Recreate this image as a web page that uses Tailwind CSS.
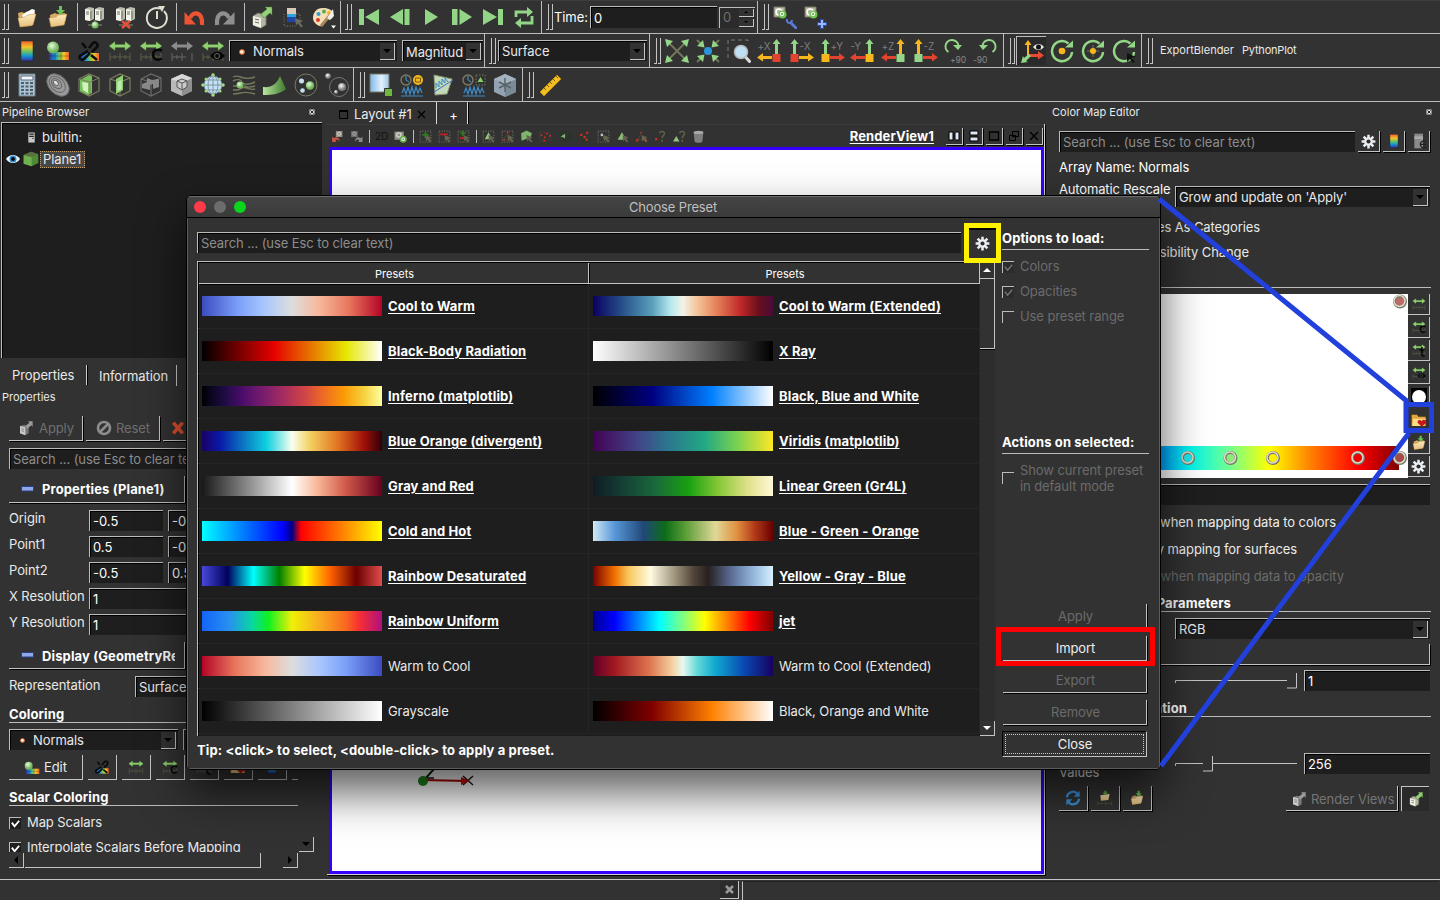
<!DOCTYPE html>
<html lang="en">
<head>
<meta charset="utf-8">
<title>ParaView</title>
<script src="https://cdn.jsdelivr.net/npm/@tailwindcss/browser@4"></script>
</head>
<body class="w-[1440px] h-[900px] overflow-hidden relative bg-[#323232] text-[#e9e9e9] font-['Inter','Liberation_Sans',sans-serif] text-[13px] tracking-[-0.09px] leading-none whitespace-nowrap flex flex-col">

<svg class="absolute size-0">
  <defs>
    <linearGradient id="gRain" x1="0" y1="0" x2="0" y2="1"><stop offset="0" stop-color="#f0622a"/><stop offset=".3" stop-color="#f5c22b"/><stop offset=".55" stop-color="#5fc06a"/><stop offset=".75" stop-color="#1495d8"/><stop offset="1" stop-color="#3a2f9c"/></linearGradient>
    <linearGradient id="gRainH"><stop offset="0" stop-color="#3a2f9c"/><stop offset=".3" stop-color="#1495d8"/><stop offset=".55" stop-color="#8cc84a"/><stop offset=".75" stop-color="#f5c22b"/><stop offset="1" stop-color="#f0622a"/></linearGradient>
    <linearGradient id="gFold" x1="0" y1="0" x2="0" y2="1"><stop offset="0" stop-color="#fdebc0"/><stop offset="1" stop-color="#e8c07a"/></linearGradient>
    <radialGradient id="gGreen" cx=".4" cy=".35"><stop offset="0" stop-color="#e6fadb"/><stop offset="1" stop-color="#74b85c"/></radialGradient>
    <radialGradient id="gGray" cx=".4" cy=".35"><stop offset="0" stop-color="#fff"/><stop offset="1" stop-color="#7d7d7d"/></radialGradient>
    <linearGradient id="gBlue"><stop offset="0" stop-color="#7db9ec"/><stop offset=".6" stop-color="#e4f1fb"/><stop offset="1" stop-color="#9cc6ea"/></linearGradient>
    <linearGradient id="gLeaf"><stop offset="0" stop-color="#b9e6a0"/><stop offset="1" stop-color="#3f7a2c"/></linearGradient>
  </defs>
  <symbol id="folder" viewBox="0 0 24 24"><path d="M3 8l4-1 2 1 4-2 7 1v6l-3 8-12 1z" fill="#d9ab62"/><path d="M7 10l10-6 3 1-2 8-9 3z" fill="#fff"/><path d="M3 13l7-1 2-2 9-1-3 11-13 2z" fill="url(#gFold)" stroke="#b98a45" stroke-width=".5"/></symbol>
  <symbol id="foldersave" viewBox="0 0 24 24"><path d="M4 10l5-2 2 1 8-1 1 6-2 6-13 1z" fill="#d9ab62"/><path d="M3 13l7-1 2-2 9-1-3 11-13 2z" fill="url(#gFold)" stroke="#b98a45" stroke-width=".5"/><path d="M13 1h3v4h3l-4.500 5L10 5h3z" fill="#6cc254"/></symbol>
  <symbol id="server" viewBox="0 0 24 24"><path d="M2 4l4-2 5 1v11l-4 2-5-1zM12 4l4-2 5 1v11l-4 2-5-1z" fill="#bdbdae"/><path d="M2 4l5 1v11l-5-1zM12 4l5 1v11l-5-1z" fill="#f4f4ec"/><path d="M3 7h3M3 9h3M13 7h3M13 9h3M8 6v8M18 6v8" stroke="#6a6a60" fill="none"/><path d="M12 15v3M5 20h14" stroke="#8a8a70"/></symbol>
  <symbol id="connect" viewBox="0 0 24 24"><use href="#server"/><circle cx="12" cy="20" r="3.500" fill="url(#gGreen)"/></symbol>
  <symbol id="disconnect" viewBox="0 0 24 24"><use href="#server"/><path d="M8 16l8 7M16 16l-8 7" stroke="#e8503c" stroke-width="2.400"/></symbol>
  <symbol id="clock" viewBox="0 0 24 24"><path d="M15 3.500A10 10 0 1 0 19 6" fill="none" stroke="#deded0" stroke-width="2"/><path d="M12 6v8" stroke="#deded0" stroke-width="2"/><path d="M13 1h7l-3 6z" fill="#deded0"/></symbol>
  <symbol id="undo" viewBox="0 0 24 24"><path d="M8 13C11 6 21 6 20 20" fill="none" stroke="#ee5433" stroke-width="4.200"/><path d="M2.500 7v12.500H14z" fill="#ee5433"/></symbol>
  <symbol id="redo" viewBox="0 0 24 24"><path d="M16 13C13 6 3 6 4 20" fill="none" stroke="#8f8f8f" stroke-width="4.200"/><path d="M21.500 7v12.500H10z" fill="#8f8f8f"/></symbol>
  <symbol id="apply" viewBox="0 0 24 24"><path d="M3 11l5-3 8 2v10l-5 3-8-3z" fill="#b4b4a4" stroke="#77775f"/><path d="M3 11l8 2v10l-8-3z" fill="#efefe4"/><path d="M5 14l4 1M5 17l4 1" stroke="#66665a"/><path d="M11 9l6-5-2-2h7v8l-2-2-6 5z" fill="#93d077" stroke="#4a7a35" stroke-width=".5"/></symbol>
  <symbol id="applyG" viewBox="0 0 24 24"><path d="M3 9l6-2 7 2v11l-5 3-8-3z" fill="#777"/><path d="M3 9l8 2v12l-8-3z" fill="#c9c9c9"/><path d="M5 13l4 1M5 16l4 1" stroke="#666"/><path d="M11 9l6-5-2-2h7v8l-2-2-6 5z" fill="#9a9a9a"/></symbol>
  <symbol id="autoc" viewBox="0 0 24 24"><path d="M6 3h9v6H6z" fill="#d8c8b8"/><path d="M6 9h9v3H6z" fill="#2aa5e0"/><path d="M6 12h9v5H6z" fill="#2047a5"/><path d="M3 9v12h12M15 9h4v6" fill="none" stroke="#7a7a64" stroke-dasharray="1 1.500"/><path d="M14 13l8 3-3 1.500 3 4-2 1-3-4-2 2z" fill="#6d6b60"/></symbol>
  <symbol id="palette" viewBox="0 0 24 24"><path d="M11 3C4 3 1 8 1 13s6 9 9 8 1-5 4-6 7 0 7-5-4-7-10-7z" fill="#f4dfb8"/><circle cx="6.500" cy="9" r="2" fill="#2f9ce0"/><circle cx="12" cy="6.500" r="2" fill="#58ae48"/><circle cx="17" cy="8" r="2" fill="#f3b420"/><circle cx="6" cy="15" r="2" fill="#dd3a2a"/><path d="M9 21L19 9" stroke="#a7895a" stroke-width="3"/><path d="M15 13l6-9 1 7-4 4z" fill="#eee"/><path d="M19 20.500h5l-2.500 3z" fill="#fff"/></symbol>
  <symbol id="first" viewBox="0 0 24 24"><path d="M2 4h5v16H2zM22 4v16L8 12z" fill="#93d587"/></symbol>
  <symbol id="prev" viewBox="0 0 24 24"><path d="M16.500 4h5v16h-5zM15 4v16L2 12z" fill="#93d587"/></symbol>
  <symbol id="play" viewBox="0 0 24 24"><path d="M6 4v16l13-8z" fill="#93d587"/></symbol>
  <symbol id="next" viewBox="0 0 24 24"><path d="M2 4h5.500v16H2zM9.500 4v16L22 12z" fill="#93d587"/></symbol>
  <symbol id="last" viewBox="0 0 24 24"><path d="M17 4h5v16h-5zM2 4v16l14-8z" fill="#93d587"/></symbol>
  <symbol id="loop" viewBox="0 0 24 24"><path d="M4 12V7h13M20 11v7H8" fill="none" stroke="#93d587" stroke-width="2.800"/><path d="M15 2l6 5-6 5zM9 13v10l-6-5z" fill="#93d587"/></symbol>
  <symbol id="cam" viewBox="0 0 24 24"><path d="M1 2h11v10H1z" fill="#b9b6a4" stroke="#77745f"/><circle cx="6" cy="7" r="3" fill="none" stroke="#fff" stroke-width="1.500"/><circle cx="9.500" cy="9.500" r="4" fill="#6bc24e"/><circle cx="9" cy="9" r="1.800" fill="none" stroke="#fff"/></symbol>
  <symbol id="camwrench" viewBox="0 0 24 24"><use href="#cam" /><path d="M17 17l7 7" stroke="#5a7bd8" stroke-width="2.800"/><path d="M14 14c-1 5 5 5 5 1" stroke="#5a7bd8" stroke-width="2" fill="none"/></symbol>
  <symbol id="camplus" viewBox="0 0 24 24"><use href="#cam"/><path d="M18 14v10M13 19h10" stroke="#2f4da8" stroke-width="4"/><path d="M18 15v8M14 19h8" stroke="#9db8f6" stroke-width="2"/></symbol>
  <symbol id="bar" viewBox="0 0 24 24"><path d="M6 2h12v20H6z" fill="url(#gRain)" stroke="#222" stroke-width=".5"/></symbol>
  <symbol id="editc" viewBox="0 0 24 24"><path d="M3 13h20v8H3z" fill="url(#gRainH)"/><path d="M3 17h20M9 13v8M15 13v8" stroke="#0004"/><circle cx="7" cy="8.500" r="6" fill="url(#gGreen)"/></symbol>
  <symbol id="chain" viewBox="0 0 24 24"><path d="M3 14h19v8H3z" fill="url(#gRainH)"/><path d="M12 9l4-5c2-2 6 1 4 4l-5 5M11 12l-7 4c-4 3 1 6 3 4l6-6M5 4l4 5M14 16l6 5" fill="none" stroke="#0b0b0b" stroke-width="2.600"/></symbol>
  <symbol id="ticks" viewBox="0 0 24 24"><path d="M2 14v8M7 16v4M12 14v8M17 16v4M22 14v8M2 18h20" stroke="#5c5c48" fill="none"/></symbol>
  <symbol id="arr" viewBox="0 0 24 24"><path d="M1 7l6-4.500v3h10v-3L23 7l-6 4.500v-3H7v3z" fill="#8fd070" stroke="#4b7a38" stroke-width=".4"/></symbol>
  <symbol id="rescale" viewBox="0 0 24 24"><use href="#ticks"/><use href="#arr"/></symbol>
  <symbol id="rescalec" viewBox="0 0 24 24"><use href="#ticks"/><use href="#arr"/><path d="M23 11.500c-5-2-9 0-9 4s4 7 9 4" fill="none" stroke="#080808" stroke-width="2.600"/></symbol>
  <symbol id="rescalet" viewBox="0 0 24 24"><use href="#ticks"/><use href="#arr"/><path d="M17 7v12c0 3 2 4 5 3M13 12h8" fill="none" stroke="#080808" stroke-width="2.600"/></symbol>
  <symbol id="rescaleg" viewBox="0 0 24 24"><path d="M2 14v8M7 16v4M12 14v8M22 14v8M2 18h14" stroke="#666" fill="none"/><path d="M1 7l6-4.500v3h10v-3L23 7l-6 4.500v-3H7v3z" fill="#8b8b8b"/></symbol>
  <symbol id="rescalee" viewBox="0 0 24 24"><use href="#ticks"/><use href="#arr"/><path d="M9 17c4-6 11-6 15 0-4 5-11 5-15 0z" fill="#080808"/><circle cx="16" cy="17" r="2.500" fill="none" stroke="#666"/></symbol>
  <symbol id="calc" viewBox="0 0 24 24"><path d="M4 1h16v22H4z" fill="#a9c8dd" stroke="#6f7d80"/><path d="M6 3h12v4H6z" fill="#eef6fa" stroke="#667"/><path d="M6 10h3M10.500 10h3M15 10h3M6 13.500h3M10.500 13.500h3M15 13.500h3M6 17h3M10.500 17h3M15 17h3M6 20.500h3M10.500 20.500h3M15 20.500h3" stroke="#545c60" stroke-width="2"/></symbol>
  <symbol id="contour" viewBox="0 0 24 24"><g fill="none" stroke="#666" transform="rotate(45 12 12)"><ellipse cx="12" cy="12" rx="13" ry="9" fill="#9a9a9a"/><ellipse cx="11" cy="12" rx="9.500" ry="6.500"/><ellipse cx="10" cy="12" rx="6" ry="4"/><ellipse cx="9" cy="12" rx="3" ry="2" fill="#ddd"/></g></symbol>
  <symbol id="clip" viewBox="0 0 24 24"><path d="M2 6l10-5 10 4v13l-10 5-10-5z" fill="none" stroke="#7c7c60" stroke-width="1.200"/><path d="M3 7l9-5 3 1v17l-4 2-8-4z" fill="#78c25c"/><path d="M5 9l6 1v10l-5-3z" fill="#d4f2c4"/><path d="M22 5l-9 4v13M13 9L2 6" fill="none" stroke="#7c7c60"/></symbol>
  <symbol id="slice" viewBox="0 0 24 24"><path d="M2 6l10-5 10 4v13l-10 5-10-5zM2 6l10 3 10-4M12 9v14" fill="none" stroke="#7c7c60" stroke-width="1.200"/><path d="M8 6l7-4v15l-7 4z" fill="#8ed372"/><path d="M9.500 9l4-2v9l-4 2z" fill="#c2eab0"/></symbol>
  <symbol id="thresh" viewBox="0 0 24 24"><path d="M2 6l10-5 10 4v13l-10 5-10-5zM2 6l10 3 10-4M12 9v14" fill="none" stroke="#6c6c6c" stroke-width="1.200"/><path d="M3 11l5-2v-4l5 2 7-1v8l-6 2v-5l-3 1v5l-8-2z" fill="#888"/></symbol>
  <symbol id="extract" viewBox="0 0 24 24"><path d="M1 6l11-5 10 4v13l-10 5-11-5z" fill="#b9b9b9"/><path d="M12 10l10-5v13l-10 5z" fill="#8f8f8f"/><path d="M1 6l11-5 10 4-10 5z" fill="#d8d8d8"/><path d="M7 8l5-2 5 2v6l-5 3-5-3zM7 8l5 2 5-2M12 10v6" fill="#c9c9c9" stroke="#555"/></symbol>
  <symbol id="glyph" viewBox="0 0 24 24"><circle cx="12" cy="12" r="9" fill="#c4e0f2" stroke="#69879a"/><path d="M3 12h18M12 2v20M5 7h14M5 17h14" stroke="#6d8898" stroke-width=".8"/><ellipse cx="12" cy="12" rx="5" ry="9" fill="none" stroke="#6d8898" stroke-width=".8"/><g fill="#a5da86"><circle cx="12" cy="2" r="1.800"/><circle cx="12" cy="22" r="1.800"/><circle cx="2" cy="12" r="1.800"/><circle cx="22" cy="12" r="1.800"/><circle cx="5" cy="6" r="1.500"/><circle cx="19" cy="6" r="1.500"/><circle cx="5" cy="18" r="1.500"/><circle cx="19" cy="18" r="1.500"/></g></symbol>
  <symbol id="stream" viewBox="0 0 24 24"><g fill="none" stroke="#757a5c" stroke-width="1.400"><path d="M1 4c7-4 8 5 22 0M1 8c4-2 8-2 9 1s7 3 13 0M1 13h4M12 13c4 2 8 1 11 0M1 17c5 0 6 0 9-2s9 3 13 1M1 21c9 0 10-4 22 0"/></g><circle cx="8" cy="12" r="3.500" fill="url(#gGreen)"/></symbol>
  <symbol id="warp" viewBox="0 0 24 24"><path d="M0 14c8 1 14-3 17-11l6 13c-6 5-13 6-23 6z" fill="url(#gLeaf)"/></symbol>
  <symbol id="group" viewBox="0 0 24 24"><circle cx="12" cy="12" r="11" fill="none" stroke="#777c60"/><circle cx="7.500" cy="8" r="2.500" fill="#c8dff0"/><circle cx="8.500" cy="17.500" r="2.300" fill="#c8dff0"/><circle cx="16" cy="12.500" r="4.200" fill="url(#gGreen)"/></symbol>
  <symbol id="ungroup" viewBox="0 0 24 24"><circle cx="14" cy="14" r="9.500" fill="none" stroke="#777"/><circle cx="3" cy="3" r="2.800" fill="url(#gGray)"/><circle cx="17" cy="14" r="4" fill="url(#gGray)"/><circle cx="11" cy="19" r="2" fill="url(#gGray)"/></symbol>
  <symbol id="exsel" viewBox="0 0 24 24"><path d="M1 1h19v18H1z" fill="url(#gBlue)" stroke="#77775f"/><path d="M15.500 15.500h8v8h-8z" fill="#6cb83c" stroke="#323232"/></symbol>
  <symbol id="wave" viewBox="0 0 24 24"><path d="M1 23h22M2 20l2-5 2 6 2-7 2 7 2-7 2 7 2-7 2 6 2-5 2 5" fill="none" stroke="#3e8ac4" stroke-width="1.200"/></symbol>
  <symbol id="ptime" viewBox="0 0 24 24"><circle cx="6" cy="7" r="5" fill="none" stroke="#7f7a63" stroke-width="1.400"/><path d="M6 3v4l3 2" stroke="#4a98d0" fill="none"/><circle cx="18" cy="7" r="5" fill="#f2b81e"/><path d="M15.500 5h5v4h-5z" fill="none" stroke="#7a5b0a"/><use href="#wave"/></symbol>
  <symbol id="pline" viewBox="0 0 24 24"><path d="M3 2l18 4-5 15-12 1z" fill="#c3d9b8" stroke="#8a937a"/><path d="M3 19L22 7" stroke="#3e6fd0"/><path d="M5 15l0-5 3 4 0-6 3 4 0-6 3 4 0-5 3 4" fill="none" stroke="#3e8ac4"/></symbol>
  <symbol id="psel" viewBox="0 0 24 24"><circle cx="6" cy="7" r="5" fill="none" stroke="#7f7a63" stroke-width="1.400"/><path d="M6 3v4l3 2" stroke="#4a98d0" fill="none"/><path d="M14 2h9v10h-9z" fill="none" stroke="#77775f" stroke-dasharray="1.500 1.500"/><path d="M18.500 4l3 5h-6z" fill="#86cf66"/><use href="#wave"/></symbol>
  <symbol id="hex" viewBox="0 0 24 24"><path d="M1 6l11-5 11 5v13l-11 5-11-5z" fill="#93a3b1"/><path d="M12 11l11-5v13l-11 5z" fill="#7b8a97"/><path d="M1 6l11-5 11 5-11 5z" fill="#a3b2bf"/><path d="M12 5v14M6 9l12 6M18 9l-12 6" stroke="#555f66" stroke-width="1.400"/></symbol>
  <symbol id="ruler" viewBox="0 0 24 24"><path d="M1 19L18 2l4 4L5 23z" fill="#f2bd22" stroke="#b88808"/><path d="M5 15l2 2M8 12l2 2M11 9l2 2M14 6l2 2M17 3l2 2" stroke="#7a5a08"/></symbol>
  <symbol id="reset" viewBox="0 0 24 24"><path d="M4 4l16 16M20 4L4 20" stroke="#77775a" stroke-width="1.800"/><path d="M0 0l8 2-6 6zM24 0l-2 8-6-6zM0 24l2-8 6 6zM24 24l-8-2 6-6z" fill="#93d687"/></symbol>
  <symbol id="zoomdata" viewBox="0 0 24 24"><path d="M1 1l5 5M23 1l-5 5M1 23l5-5M23 23l-5-5" stroke="#77775a" stroke-width="1.800"/><path d="M8.500 8.500L1 7l6-6zM15.500 8.500L17 1l6 6zM8.500 15.500L7 23l-6-6zM15.500 15.500L23 17l-6 6z" fill="#93d687"/><circle cx="12" cy="12" r="4" fill="#2a97dc"/></symbol>
  <symbol id="zoombox" viewBox="0 0 24 24"><path d="M1 19V1h20v4" fill="none" stroke="#7d7d72" stroke-dasharray="4 3"/><circle cx="14" cy="13" r="6.500" fill="#bfe0f5" stroke="#b9b9b9" stroke-width="1.500"/><path d="M18.500 18l5 5.500" stroke="#ddd" stroke-width="3"/></symbol>
  <symbol id="axes" viewBox="0 0 24 24"><path d="M7 17V6H4.500L8 1l3.500 5H9v11z" fill="#f6b61c"/><path d="M9 15h9v-3l6 4.500-6 4V18H9z" fill="#e84a33"/><path d="M9 15l-5 4-1-2-2 7 7-1-2-1 5-5z" fill="#93d687"/><path d="M13 8c3-4 8-4 11 0-3 4-8 4-11 0z" fill="#e9e9e9"/><circle cx="18.500" cy="8" r="2.500" fill="#111"/></symbol>
  <symbol id="ring" viewBox="0 0 24 24"><path d="M18.500 4.500A10 10 0 1 0 22 13" fill="none" stroke="#93d687" stroke-width="2.500"/><path d="M15 8.500h8V1.500z" fill="#93d687"/></symbol>
  <symbol id="ring1" viewBox="0 0 24 24"><use href="#ring"/><circle cx="12" cy="12" r="3.300" fill="#f6b61c"/></symbol>
  <symbol id="ring2" viewBox="0 0 24 24"><use href="#ring"/><path d="M12 6v12M6 12h12" stroke="#77775a"/><circle cx="12" cy="12" r="3" fill="#f6b61c"/></symbol>
  <symbol id="ring3" viewBox="0 0 24 24"><use href="#ring"/><path d="M15 14l9 4-4 1 3 4-2 1-3-4-3 3z" fill="#111"/></symbol>
  <symbol id="gear" viewBox="0 0 24 24"><g stroke="#e9eef2" stroke-width="4"><path d="M12 1v22M1 12h22M4.200 4.200l15.600 15.600M19.800 4.200L4.200 19.800"/></g><circle cx="12" cy="12" r="7" fill="#e9eef2"/><circle cx="12" cy="12" r="3.300" fill="#2c2c2c"/></symbol>
  <symbol id="eye" viewBox="0 0 24 24"><path d="M0 12C6 3 18 3 24 12 18 21 6 21 0 12z" fill="#f2f6f9"/><circle cx="12" cy="12" r="6" fill="#2b8fd4"/><circle cx="12" cy="12" r="3.300" fill="#0a0a0a"/></symbol>
  <symbol id="cube" viewBox="0 0 24 24"><path d="M1 6l11-5 11 4v13l-10 5-12-4z" fill="#4d8a35"/><path d="M1 6l12 3v14l-12-4z" fill="#70b04f"/><path d="M1 6l11-5 11 4-10 4z" fill="#5b6f3f"/></symbol>
  <symbol id="tower" viewBox="0 0 24 24"><path d="M5 1h14v22H5z" fill="#c8c8c8"/><path d="M7 3h10v3H7zM7 8h10v3H7z" fill="#222"/><circle cx="15" cy="14" r="1.500" fill="#333"/></symbol>
  <symbol id="forbid" viewBox="0 0 24 24"><circle cx="12" cy="12" r="9" fill="none" stroke="#8c8c8c" stroke-width="4"/><path d="M6 18L18 6" stroke="#8c8c8c" stroke-width="4"/></symbol>
  <symbol id="redx" viewBox="0 0 24 24"><path d="M5 4l14 16M19 4L5 20" stroke="#e4502f" stroke-width="5.500"/></symbol>
  <symbol id="fav" viewBox="0 0 24 24"><path d="M1 4h8l2 3h11v14H1z" fill="#e4a63a"/><path d="M3 10h19l-2 11H2z" fill="#fbdc86"/><path d="M16 22l-6-6c-1-4 4-6 6-2 1-4 8-3 7 2z" fill="#c41818"/></symbol>
  <symbol id="sync" viewBox="0 0 24 24"><path d="M3 11a9 9 0 0 1 16-5M21 13a9 9 0 0 1-16 5" fill="none" stroke="#3c92dc" stroke-width="3.500"/><path d="M22 1v9h-9zM2 23v-9h9z" fill="#3c92dc"/></symbol>
  <symbol id="foldertick" viewBox="0 0 24 24"><path d="M5 8l14-2-2 9-11 1z" fill="url(#gFold)"/><path d="M11 1h3v3h3l-4.500 4L8 4h3z" fill="#5fae45"/><path d="M1 17v6M7 18v4M13 17v6M22 17v6M1 20h22" stroke="#565644"/></symbol>
  <symbol id="selbox" viewBox="0 0 24 24"><path d="M2 2h20v20H2z" fill="none" stroke="#77776a" stroke-width="2" stroke-dasharray="2 2.500"/></symbol>
  <symbol id="cur" viewBox="0 0 24 24"><path d="M12 9l11 5-4 2 4 5-3 2-4-5-3 3z" fill="#6e6b58"/></symbol>
  <symbol id="sadd" viewBox="0 0 24 24"><use href="#selbox"/><path d="M12 3v12M6 9h12" stroke="#2e8a1e" stroke-width="3.500"/><use href="#cur"/></symbol>
  <symbol id="ssub" viewBox="0 0 24 24"><use href="#selbox"/><path d="M4 8h14" stroke="#e01818" stroke-width="3.500"/><use href="#cur"/></symbol>
  <symbol id="stog" viewBox="0 0 24 24"><use href="#selbox"/><path d="M11 2v9M6 6h10" stroke="#2e8a1e" stroke-width="3"/><path d="M5 15h13" stroke="#e01818" stroke-width="3.500"/><use href="#cur"/></symbol>
  <symbol id="stri" viewBox="0 0 24 24"><use href="#selbox"/><path d="M12 4l7 13H5z" fill="#a4dd8a"/><use href="#cur"/></symbol>
  <symbol id="spt" viewBox="0 0 24 24"><use href="#selbox"/><path d="M12 5L5 18h13z" fill="none" stroke="#77553f"/><path d="M11 3h3v3h-3zM4 17h3v3H4z" fill="#f03018"/><use href="#cur"/></symbol>
  <symbol id="fcell" viewBox="0 0 24 24"><path d="M2 6l10-5 10 5-3 9-7 1-9 4z" fill="#8ccb76"/><use href="#cur"/></symbol>
  <symbol id="fpt" viewBox="0 0 24 24"><path d="M2 3l18 3v12L2 21z" fill="none" stroke="#77553f" stroke-dasharray="2 2"/><path d="M3 8h3v3H3zM9 12h3v3H9zM13 5h3v3h-3zM19 9h3v3h-3zM8 18h3v3H8z" fill="#f03018"/></symbol>
  <symbol id="pcell" viewBox="0 0 24 24"><path d="M2 7l14-5M2 7l10 14 10-4V3" fill="none" stroke="#1c3a18" stroke-width="2"/><path d="M13 7v8l-8-3z" fill="#8ccb76"/></symbol>
  <symbol id="ppt" viewBox="0 0 24 24"><path d="M2 5l10 16 9-4" fill="none" stroke="#1c3a18" stroke-width="2"/><path d="M4 7h4v4H4zM15 3h4v4h-4zM10 11h4v4h-4zM14 16h4v4h-4z" fill="#f03018"/></symbol>
  <symbol id="blk" viewBox="0 0 24 24"><use href="#selbox"/><circle cx="9" cy="9" r="2.500" fill="#ddd"/><circle cx="15" cy="14" r="3" fill="#bcd"/><use href="#cur"/></symbol>
  <symbol id="tri" viewBox="0 0 24 24"><path d="M11 4l8 14H3z" fill="#9ad884"/><use href="#cur"/></symbol>
  <symbol id="tript" viewBox="0 0 24 24"><path d="M12 5L5 18h13" fill="none" stroke="#77553f"/><path d="M10 3h3v3h-3zM2 17h4v4H2zM18 17h4v4h-4z" fill="#f03018"/><use href="#cur"/></symbol>
  <symbol id="qpt" viewBox="0 0 24 24"><path d="M2 15h4v4H2z" fill="#f03018"/><path d="M10 6c2-5 11-4 9 2-1 3-4 3-4 7M15 18v4" fill="none" stroke="#6c6c4c" stroke-width="2.600"/></symbol>
  <symbol id="qtri" viewBox="0 0 24 24"><path d="M6 11l6 10H0z" fill="#a4dd8a"/><path d="M12 6c2-5 11-4 9 2-1 3-4 3-4 7M17 18v4" fill="none" stroke="#6c6c4c" stroke-width="2.600"/></symbol>
  <symbol id="trash" viewBox="0 0 24 24"><path d="M3 4h18l-2 18c-3 2-11 2-14 0z" fill="#8d8d8d"/><ellipse cx="12" cy="4.500" rx="9" ry="3" fill="#bdbdbd"/></symbol>
  <symbol id="camundo" viewBox="0 0 24 24"><path d="M9 2h12v11H9z" fill="#a9a595"/><circle cx="15" cy="7" r="3" fill="none" stroke="#fff" stroke-width="1.500"/><path d="M2 22V12l3 3c6-4 11 0 11 7-3-5-6-5-8-3l2 3z" fill="#e0604a"/></symbol>
  <symbol id="camredo" viewBox="0 0 24 24"><path d="M2 2h12v11H2z" fill="#7d7d7d"/><circle cx="8" cy="7" r="3" fill="none" stroke="#ccc" stroke-width="1.500"/><path d="M23 22V12l-3 3c-6-4-11 0-11 7 3-5 6-5 8-3l-2 3z" fill="#9a9a9a"/></symbol>
  <symbol id="camlink" viewBox="0 0 24 24"><path d="M1 3h17v15H1z" fill="#a9a595"/><circle cx="9" cy="9" r="4" fill="none" stroke="#fff" stroke-width="2"/><circle cx="17" cy="17" r="6.500" fill="#6bc24e"/><circle cx="17" cy="17" r="2.500" fill="none" stroke="#fff" stroke-width="2"/></symbol>
  <symbol id="barg" viewBox="0 0 24 24"><path d="M5 1h13v22H5z" fill="#8a8a8a"/><path d="M5 5h13v4H5z" fill="#aaa"/><path d="M23 13c-5-2-9 0-9 4s4 7 9 4M15 17h8" fill="none" stroke="#222" stroke-width="2"/></symbol>
  <symbol id="orange" viewBox="0 0 24 24"><circle cx="12" cy="12" r="11" fill="#f08a4a"/><circle cx="11" cy="11" r="6.500" fill="#fff3e4"/></symbol>
  <symbol id="minus" viewBox="0 0 13 6"><path d="M.5.500h12v4.500H.5z" fill="#8fa8ea" stroke="#26408f"/></symbol>
  <symbol id="dockx" viewBox="0 0 6 6"><path d="M.5.500h5v5h-5z" fill="#ddd"/><path d="M1.500 1.500l3 3M4.500 1.500l-3 3" stroke="#222"/></symbol>
</svg>

<!-- Toolbar row 1 -->
<div id="tb1" class="h-[34px] shrink-0 border-b border-[#bcbcbc] border-t border-t-[#3d3d3d] flex items-center"></div>
<!-- Toolbar row 2 -->
<div id="tb2" class="h-[34px] shrink-0 border-b border-[#bcbcbc] flex items-center"></div>
<!-- Toolbar row 3 -->
<div id="tb3" class="h-[34px] shrink-0 border-b border-[#bcbcbc] flex items-center"></div>

<main class="flex h-[777px] shrink-0">
  <!-- Left dock -->
  <section class="w-[327px] shrink-0 flex flex-col">
    <div class="h-5 flex items-center justify-between pl-0.5 pr-[12px] text-[11px] tracking-normal"><span>Pipeline Browser</span><svg class="size-1.5"><use href="#dockx"/></svg></div>
    <div class="ml-px h-[236px] w-[321px] bg-[#1e1e1e] border-t border-l border-[#bcbcbc] shadow-[inset_1px_1px_0_#000] flex flex-col pt-px">
      <div class="h-[23px] flex items-center"><svg class="ml-6 w-[11px] h-[13px] mt-1"><use href="#tower"/></svg><span class="ml-[5px] mt-[4px]">builtin:</span></div>
      <div class="h-[24px] flex items-center"><svg class="ml-1 w-[14px] h-[14px]"><use href="#eye"/></svg><svg class="ml-[3px] size-4"><use href="#cube"/></svg><span class="ml-px h-[17px] w-[45px] bg-[#474747] border border-dotted border-[#c9a06a] flex items-center pl-0.5">Plane1</span></div>
    </div>
    <div class="h-[28px] flex items-start pt-[7px]">
      <div class="w-[87px] h-5 border-r border-[#d0d0d0] flex items-center pl-3 shadow-[1px_0_0_#000]">Properties</div>
      <div class="w-[90px] h-[21px] border-r border-[#d0d0d0] flex items-center pl-3 pt-0.5">Information</div>
    </div>
    <div class="h-[22px] flex items-center pl-0.5 text-[11px] tracking-normal">Properties</div>
    <div class="pl-[9px] pt-2 flex gap-[3px]">
      <div class="w-[74px] h-[25px] border-r border-b border-[#c4c4c4] shadow-[1px_1px_0_#000] flex items-center text-[#6f6f6f]"><svg class="size-4 ml-[9px] mr-[5px]"><use href="#applyG"/></svg>Apply</div>
      <div class="w-[74px] h-[25px] border-r border-b border-[#c4c4c4] shadow-[1px_1px_0_#000] flex items-center text-[#6f6f6f]"><svg class="size-4 ml-2.5 mr-[4px]"><use href="#forbid"/></svg>Reset</div>
      <div class="w-[74px] h-[25px] border-r border-b border-[#c4c4c4] shadow-[1px_1px_0_#000] flex items-center"><svg class="size-4 ml-[7px]"><use href="#redx"/></svg></div>
    </div>
    <div class="ml-[9px] mt-[7px] h-[21px] w-[289px] bg-[#1e1e1e] border-t border-l border-[#bcbcbc] shadow-[inset_1px_1px_0_#000] flex items-center pl-[3px] text-[#8d8d8d]">Search ... (use Esc to clear text)</div>
    <div class="ml-[9px] mt-[7px] h-[27px] w-[176px] border-r border-b border-[#c4c4c4] shadow-[1px_1px_0_#000] flex items-center font-bold tracking-[0.13px] text-white pt-px"><svg class="w-[13px] h-[6px] ml-3 mr-2 -mt-0.5"><use href="#minus"/></svg>Properties (Plane1)</div>
    <div id="props" class="pl-[9px] pt-[7px] flex flex-col gap-[5px]"></div>
    <div class="ml-[9px] mt-[7px] h-[27px] w-[176px] border-r border-b border-[#c4c4c4] shadow-[1px_1px_0_#000] flex items-center font-bold tracking-[0.13px] text-white pt-px"><svg class="w-[13px] h-[6px] ml-3 mr-2 shrink-0 -mt-0.5"><use href="#minus"/></svg><span class="w-[133px] h-4 overflow-hidden leading-4">Display (GeometryRepresentation)</span></div>
    <div class="ml-[9px] mt-[7px] h-[21px] flex"><span class="w-[126px] pt-[3px]">Representation</span><span class="w-[160px] bg-[#1e1e1e] border-t border-l border-[#bcbcbc] shadow-[inset_1px_1px_0_#000] flex items-center pl-[3px]">Surface</span></div>
    <div class="ml-[9px] mt-[8px] h-[18px] w-[289px] border-b border-[#bcbcbc] font-bold tracking-[0.13px] text-white leading-[18px]">Coloring</div>
    <div class="ml-[9px] mt-[6px] h-[21px] flex gap-[5px]">
      <div class="w-[169px] bg-[#1e1e1e] border-t border-l border-[#bcbcbc] shadow-[inset_1px_1px_0_#000] flex items-center pl-2.5"><svg class="size-[5px] mr-[8px]"><use href="#orange"/></svg>Normals<span class="ml-auto mr-0.5 w-[15px] h-[17px] bg-[#323232] border-r border-b border-[#c4c4c4] flex items-center justify-center"><svg class="w-2 h-1" viewBox="0 0 8 4"><path d="M0 0h8L4 4z"/></svg></span></div>
      <div class="w-[110px] bg-[#1e1e1e] border-t border-l border-[#bcbcbc]"></div>
    </div>
    <div class="ml-[9px] mt-[5px] h-[26px] w-[289px] overflow-hidden flex gap-[5px]">
      <div class="w-[74px] h-[25px] shrink-0 border-r border-b border-[#c4c4c4] flex items-center pt-px"><svg class="size-4 ml-[15px] mr-1"><use href="#editc"/></svg>Edit</div>
      <div class="w-[29px] h-[25px] shrink-0 border-r border-b border-[#c4c4c4] flex items-center justify-center"><svg class="size-4"><use href="#chain"/></svg></div>
      <div class="w-[29px] h-[25px] shrink-0 border-r border-b border-[#c4c4c4] flex items-center justify-center"><svg class="size-4"><use href="#rescale"/></svg></div>
      <div class="w-[29px] h-[25px] shrink-0 border-r border-b border-[#c4c4c4] flex items-center justify-center"><svg class="size-4"><use href="#rescalec"/></svg></div>
      <div class="w-[29px] h-[25px] shrink-0 border-r border-b border-[#c4c4c4] flex items-center justify-center"><svg class="size-4"><use href="#rescalet"/></svg></div>
      <div class="w-[29px] h-[25px] shrink-0 border-r border-b border-[#c4c4c4] flex items-center justify-center"><svg class="size-4"><use href="#fav"/></svg></div>
      <div class="w-[29px] h-[25px] shrink-0 border-r border-b border-[#c4c4c4] flex items-center justify-center"><svg class="size-4"><use href="#bar"/></svg></div>
      <div class="w-[29px] h-[25px] shrink-0 border-r border-b border-[#c4c4c4]"></div>
    </div>
    <div class="ml-[9px] mt-[7px] h-[18px] w-[289px] border-b border-[#bcbcbc] font-bold tracking-[0.13px] text-white leading-[18px]">Scalar Coloring</div>
    <div class="flex h-[46px]">
      <div class="ml-[9px] w-[290px] overflow-hidden flex flex-col">
        <div class="h-[17px] mt-[8px] shrink-0 flex items-center"><span class="size-3 bg-[#1e1e1e] border-t border-l border-[#bcbcbc] mr-1.5"><svg viewBox="0 0 12 12" class="size-[11px]"><path d="M2 5l3 4 5-6" stroke="#fff" stroke-width="2" fill="none"/></svg></span>Map Scalars</div>
        <div class="h-[17px] mt-[8px] shrink-0 flex items-center"><span class="size-3 bg-[#1e1e1e] border-t border-l border-[#bcbcbc] mr-1.5"><svg viewBox="0 0 12 12" class="size-[11px]"><path d="M2 5l3 4 5-6" stroke="#fff" stroke-width="2" fill="none"/></svg></span>Interpolate Scalars Before Mapping</div>
      </div>
      <div class="w-[15px] mt-auto h-[15px] border-r border-b border-[#c4c4c4] flex items-center justify-center"><svg class="w-2 h-1" viewBox="0 0 8 4"><path d="M0 0h8L4 4z"/></svg></div>
    </div>
    <div class="ml-[9px] mt-px h-[15px] flex">
      <span class="w-[15px] border-r border-b border-[#c4c4c4] flex items-center justify-center"><svg class="w-1 h-2" viewBox="0 0 4 8"><path d="M4 0v8L0 4z"/></svg></span>
      <span class="w-[236px] ml-px border-r border-b border-[#c4c4c4]"></span>
      <span class="w-[15px] ml-[22px] border-r border-b border-[#c4c4c4] flex items-center justify-center"><svg class="w-1 h-2" viewBox="0 0 4 8"><path d="M0 0v8l4-4z"/></svg></span>
    </div>
  </section>

  <!-- Centre: layout and render view -->
  <section class="w-[719px] shrink-0 flex flex-col">
    <div class="h-[22px] flex items-start">
      <div class="w-[110px] h-[22px] border-r border-[#d8d8d8] flex items-center pl-[12px] pt-0.5"><span class="size-[9px] border border-t-2 border-black mr-[6px]"></span>Layout #1<svg class="size-[9px] ml-[5px]" viewBox="0 0 9 9"><path d="M1 1l7 7M8 1l-7 7" stroke="#000" stroke-width="1.300"/></svg></div>
      <div class="w-[31px] h-[22px] border-r border-[#d8d8d8] flex items-center justify-center pt-1 pl-[3px] text-white shadow-[1px_0_0_#000]">+</div>
    </div>
    <div class="w-[718px] h-[751px] border-r border-[#d0d0d0] border-b flex flex-col shadow-[1px_1px_0_#000]">
      <div id="vtb" class="h-[23px] flex items-center border-t border-[#3b3b3b]"></div>
      <div class="flex-1 ml-0.5 mr-0 border-[3px] border-[#3500ff] bg-white flex items-end"><svg class="w-[70px] h-[38px] ml-[80px] mb-[72px]" viewBox="0 0 70 38"><path d="M12 19L56 20" stroke="#b00000" stroke-width="2"/><path d="M11 20L22 8" stroke="#1f8a1c" stroke-width="2"/><path d="M14 8h8l-8 9h8" fill="none" stroke="#111" stroke-width="1.500"/><circle cx="11" cy="20" r="5" fill="#1f8a1c"/><path d="M51 15l10 9M61 15l-10 9" stroke="#111" stroke-width="1.300"/><path d="M49 16l9 4-9 4z" fill="#d01010"/></svg></div>
    </div>
  </section>

  <!-- Right dock: colour map editor -->
  <section class="w-[394px] shrink-0 flex flex-col">
    <div class="h-5 flex items-center justify-between pl-[6px] pr-[8px] text-[11px] tracking-[0.03px]"><span>Color Map Editor</span><svg class="size-1.5"><use href="#dockx"/></svg></div>
    <div class="ml-[13px] mt-[9px] h-[21px] flex gap-[3px]">
      <div class="w-[296px] bg-[#1e1e1e] border-t border-l border-[#bcbcbc] shadow-[inset_1px_1px_0_#000] flex items-center pl-[3px] pt-px text-[#8d8d8d]">Search ... (use Esc to clear text)</div>
      <div class="w-[22px] border-r border-b border-[#c4c4c4] shadow-[1px_1px_0_#000] flex items-center justify-center"><svg class="size-[15px]"><use href="#gear"/></svg></div>
      <div class="w-[22px] border-r border-b border-[#c4c4c4] shadow-[1px_1px_0_#000] flex items-center justify-center"><svg class="size-4"><use href="#bar"/></svg></div>
      <div class="w-[22px] border-r border-b border-[#c4c4c4] shadow-[1px_1px_0_#000] flex items-center justify-center"><svg class="size-4"><use href="#barg"/></svg></div>
    </div>
    <div class="ml-[13px] h-[34px] flex items-center text-white pb-1">Array Name: Normals</div>
    <div class="ml-[13px] h-[21px] flex"><span class="w-[116px] h-[9px] -mt-[3px] text-white tracking-[-0.15px]">Automatic Rescale</span><span class="w-[255px] bg-[#1e1e1e] border-t border-l border-[#bcbcbc] shadow-[inset_1px_1px_0_#000] flex items-center pl-[3px]">Grow and update on 'Apply'<span class="ml-auto mr-0.5 w-[15px] h-[17px] bg-[#323232] border-r border-b border-[#c4c4c4] flex items-center justify-center"><svg class="w-2 h-1" viewBox="0 0 8 4"><path d="M0 0h8L4 4z"/></svg></span></span></div>
    <div class="w-[214px] h-[25px] mt-[8px] flex items-center justify-end">Interpret Values As Categories</div>
    <div class="w-[203px] h-[25px] flex items-center justify-end">Rescale On Visibility Change</div>
    <div class="ml-[13px] w-[372px] h-[23px] border-b border-[#bcbcbc]"></div>
    <div class="ml-[13px] mt-[6px] h-[184px] flex">
      <div class="w-[349px] bg-white relative">
        <div class="h-6 mt-[152px] w-[340px] bg-[linear-gradient(90deg,#00008f_0%,#0000ff_12%,#0070ff_27%,#00c8ff_33%,#00f5ef_38.500%,#70ff90_50%,#ffff00_62%,#ff8000_74%,#ff0000_88%,#800000_100%)]"></div>
        <svg class="absolute inset-0 w-[349px] h-[184px]" fill="none"><g stroke="#77776a" stroke-width="3"><circle cx="129" cy="164" r="5.500" fill="#1ce8e8"/><circle cx="171.500" cy="164" r="5.500" fill="#8ceb78"/><circle cx="214" cy="164" r="5.500" fill="#fff000"/><circle cx="299" cy="164" r="5.500" fill="#f00000"/><circle cx="341" cy="164" r="5.500" fill="#a84848"/><circle cx="341" cy="7.500" r="5.500" fill="#bf6a6a"/></g><g stroke="#dddcc8" stroke-width="1.500"><circle cx="128.500" cy="163.500" r="5.500"/><circle cx="171" cy="163.500" r="5.500"/><circle cx="213.500" cy="163.500" r="5.500"/><circle cx="298.500" cy="163.500" r="5.500"/><circle cx="340.500" cy="163.500" r="5.500"/><circle cx="340.500" cy="7" r="5.500"/></g></svg>
      </div>
      <div class="w-[22px] flex flex-col gap-0.5">
        <div class="h-[21px] border-r border-b border-[#c4c4c4] flex items-center justify-center"><svg class="size-[14px]"><use href="#rescale"/></svg></div>
        <div class="h-[21px] border-r border-b border-[#c4c4c4] flex items-center justify-center"><svg class="size-[14px]"><use href="#rescalec"/></svg></div>
        <div class="h-[21px] border-r border-b border-[#c4c4c4] flex items-center justify-center"><svg class="size-[14px]"><use href="#rescalet"/></svg></div>
        <div class="h-[21px] border-r border-b border-[#c4c4c4] flex items-center justify-center"><svg class="size-[14px]"><use href="#rescalee"/></svg></div>
        <div class="h-[21px] border-r border-b border-[#c4c4c4] flex items-center justify-center"><span class="size-4 bg-black"><span class="block size-[14px] mt-0.5 mx-px rounded-full bg-white"></span></span></div>
        <div class="h-[22px] border-r border-b border-[#c4c4c4] flex items-center justify-center"><svg class="size-4"><use href="#fav"/></svg></div>
        <div class="h-[21px] border-r border-b border-[#c4c4c4] flex items-center justify-center"><svg class="size-4"><use href="#foldersave"/></svg></div>
        <div class="h-[21px] border-r border-b border-[#c4c4c4] flex items-center justify-center"><svg class="size-[15px]"><use href="#gear"/></svg></div>
      </div>
    </div>
    <div class="ml-[13px] mt-[6px] h-[21px] w-[371px] bg-[#1e1e1e] border-t border-l border-[#bcbcbc] shadow-[inset_1px_1px_0_#000]"></div>
    <div class="w-[290px] h-[27px] mt-[4px] flex items-center justify-end text-[#ededed]">Use log scale when mapping data to colors</div>
    <div class="w-[251px] h-[27px] flex items-center justify-end text-[#ededed]">Enable opacity mapping for surfaces</div>
    <div class="w-[298px] h-[27px] flex items-center justify-end text-[#6b6b6b]">Use log scale when mapping data to opacity</div>
    <div class="ml-[13px] w-[372px] h-[22px] border-b border-[#bcbcbc] flex items-center font-bold tracking-[0.13px] text-white pt-[6px]"><span class="w-[172px] flex justify-end">Color Mapping Parameters</span></div>
    <div class="ml-[129px] mt-[6px] h-[21px] w-[255px] bg-[#1e1e1e] border-t border-l border-[#bcbcbc] shadow-[inset_1px_1px_0_#000] flex items-center pl-[3px]">RGB<span class="ml-auto mr-0.5 w-[15px] h-[17px] bg-[#323232] border-r border-b border-[#c4c4c4] flex items-center justify-center"><svg class="w-2 h-1" viewBox="0 0 8 4"><path d="M0 0h8L4 4z"/></svg></span></div>
    <div class="ml-[13px] mt-[5px] h-[21px] w-[371px] border-r border-b border-[#c4c4c4] shadow-[1px_1px_0_#000]"></div>
    <div class="ml-[129px] mt-[5px] h-[21px] flex items-center gap-[7px]">
      <svg class="w-[122px] h-4" viewBox="0 0 122 16"><path d="M.5 10V7.500H122" stroke="#c4c4c4" fill="none"/><path d="M112 1h9v14h-9z" fill="#323232"/><path d="M112 15h9.500V0" stroke="#c4c4c4" fill="none"/></svg>
      <div class="w-[126px] h-[21px] bg-[#1e1e1e] border-t border-l border-[#bcbcbc] shadow-[inset_1px_1px_0_#000] flex items-center pl-[3px] pt-px text-white">1</div>
    </div>
    <div class="ml-[13px] w-[372px] h-[26px] border-b border-[#bcbcbc] flex items-center font-bold tracking-[0.13px] text-white pt-[10px]"><span class="w-[128px] flex justify-end">Color Discretization</span></div>
    <div class="ml-[129px] mt-[36px] h-[21px] flex items-center gap-[7px]">
      <svg class="w-[122px] h-4" viewBox="0 0 122 16"><path d="M.5 10V7.500H122" stroke="#c4c4c4" fill="none"/><path d="M28 1h9v14h-9z" fill="#323232"/><path d="M28 15h9.500V0" stroke="#c4c4c4" fill="none"/></svg>
      <div class="w-[126px] h-[21px] bg-[#1e1e1e] border-t border-l border-[#bcbcbc] shadow-[inset_1px_1px_0_#000] flex items-center pl-[3px] pt-px text-white">256</div>
    </div>
    <div class="ml-[13px] h-3 -mt-[8px] leading-3">Values</div>
    <div class="ml-[13px] mt-[8px] h-[25px] flex gap-[3px]">
      <div class="w-[29px] border-r border-b border-[#c4c4c4] shadow-[1px_1px_0_#000] flex items-center justify-center"><svg class="size-4"><use href="#sync"/></svg></div>
      <div class="w-[29px] border-r border-b border-[#c4c4c4] shadow-[1px_1px_0_#000] flex items-center justify-center"><svg class="size-4"><use href="#foldertick"/></svg></div>
      <div class="w-[29px] border-r border-b border-[#c4c4c4] shadow-[1px_1px_0_#000] flex items-center justify-center"><svg class="size-4"><use href="#foldersave"/></svg></div>
      <div class="ml-[131px] w-[112px] border-r border-b border-[#c4c4c4] shadow-[1px_1px_0_#000] flex items-center pt-0.5 text-[#757575]"><svg class="size-4 ml-[5px] mr-[4px]"><use href="#applyG"/></svg>Render Views</div>
      <div class="w-[28px] border-t border-l border-[#c4c4c4] bg-[#2a2a2a] flex items-center justify-center"><svg class="size-4"><use href="#apply"/></svg></div>
    </div>
  </section>
</main>

<!-- Status bar -->
<footer class="h-[21px] shrink-0 border-t border-[#c4c4c4] flex">
  <div class="ml-[720px] w-[19px] mt-px h-[18px] border-r border-b border-[#c4c4c4] bg-[#2b2b2b] flex items-center justify-center"><svg class="size-[9px]" viewBox="0 0 9 9"><path d="M1 1l7 7M8 1L1 8" stroke="#999" stroke-width="2.500"/></svg></div>
  <div class="ml-[3px] mt-px w-[696px] border-l border-t border-l-[#c4c4c4] border-t-[#222]"></div>
</footer>

<!-- Choose Preset dialog -->
<div class="absolute left-[186px] top-[195px] w-[975px] h-[575px] rounded-[5px] bg-[#323232] border border-black shadow-[0_22px_45px_0_rgba(0,0,0,0.65)] flex flex-col overflow-hidden">
  <div class="h-[22px] shrink-0 bg-linear-to-b from-[#444444] to-[#3a3a3a] border-t border-t-[#6c6c6c] border-b border-b-black flex items-center">
    <span class="size-3 rounded-full bg-[#ff3b4a] ml-[7px]"></span><span class="size-3 rounded-full bg-[#6c6c6c] ml-2"></span><span class="size-3 rounded-full bg-[#0ad41e] ml-2"></span>
    <span class="w-[854px] text-center text-[#bfbfbf] tracking-[-0.15px] pt-px">Choose Preset</span>
  </div>
  <div class="flex flex-1 border-l border-r border-[#5c5c5c] border-b">
    <div class="ml-[9px] w-[798px] shrink-0 flex flex-col">
      <div class="mt-[14px] h-[21px] flex">
        <div class="w-[764px] bg-[#1e1e1e] border-t border-l border-[#bcbcbc] shadow-[inset_1px_1px_0_#000] flex items-center pl-[3px] pt-px text-[#8d8d8d]">Search ... (use Esc to clear text)</div>
      </div>
      <div class="mt-[8px] h-[475px] border-t border-l border-[#bcbcbc] shadow-[inset_1px_1px_0_#000] bg-[#1e1e1e] flex">
        <div class="w-[782px] flex flex-col">
          <div class="h-[21px] shrink-0 flex bg-[#323232] ml-px mt-px text-[11px] tracking-normal text-white">
            <div class="w-[390px] border-r border-b border-[#c4c4c4] shadow-[1px_1px_0_#000] flex items-center justify-center pt-[3px] pl-0.5">Presets</div>
            <div class="w-[391px] border-r border-b border-[#c4c4c4] flex items-center justify-center pt-[3px] pl-0.5">Presets</div>
          </div>
          <div id="presets" class="grid grid-cols-[391px_391px]"></div>
        </div>
        <div class="w-[15px] bg-[#2d2d2d] flex flex-col">
          <div class="h-[17px] bg-[#323232] border-r border-b border-[#c4c4c4] flex items-center justify-center"><svg class="w-2 h-1" viewBox="0 0 8 4"><path d="M0 4h8L4 0z" fill="#fff"/></svg></div>
          <div class="h-[70px] bg-[#323232] border-r border-b border-[#c4c4c4] shadow-[0_1px_0_#000]"></div>
          <div class="mt-auto h-[15px] bg-[#323232] border-r border-b border-[#c4c4c4] flex items-center justify-center"><svg class="w-2 h-1" viewBox="0 0 8 4"><path d="M0 0h8L4 4z" fill="#fff"/></svg></div>
        </div>
      </div>
      <div class="h-[28px] flex items-center font-bold tracking-[0.13px] text-white">Tip: &lt;click&gt; to select, &lt;double-click&gt; to apply a preset.</div>
    </div>
    <div class="ml-[7px] w-[147px] flex flex-col text-[#6b6b6b]">
      <div class="mt-[10px] h-[22px] border-b border-[#bcbcbc] flex items-center font-bold tracking-[0.13px] text-white pb-px">Options to load:</div>
      <div class="h-[25px] mt-[4px] flex items-center"><span class="size-3 border-t border-l border-[#bcbcbc] bg-[#2c2c2c] mr-1.5"><svg viewBox="0 0 12 12" class="size-[11px]"><path d="M2 5l3 4 5-6" stroke="#777" stroke-width="1.500" fill="none"/></svg></span>Colors</div>
      <div class="h-[25px] flex items-center"><span class="size-3 border-t border-l border-[#bcbcbc] bg-[#2c2c2c] mr-1.5"><svg viewBox="0 0 12 12" class="size-[11px]"><path d="M2 5l3 4 5-6" stroke="#777" stroke-width="1.500" fill="none"/></svg></span>Opacities</div>
      <div class="h-[25px] flex items-center"><span class="size-3 border-t border-l border-[#bcbcbc] mr-1.5"></span>Use preset range</div>
      <div class="mt-[103px] h-[22px] border-b border-[#bcbcbc] flex items-center font-bold tracking-[0.13px] text-white pb-px">Actions on selected:</div>
      <div class="mt-[8px] h-8 flex items-center leading-4"><span class="size-3 border-t border-l border-[#bcbcbc] mr-1.5"></span><span>Show current preset<br>in default mode</span></div>
      <div class="mt-[110px] h-[25px] w-[144px] ml-px border-r border-b border-[#c4c4c4] shadow-[1px_1px_0_#000] flex items-center justify-center pl-0.5 pt-px">Apply</div>
      <div class="mt-[7px] h-[25px] w-[144px] ml-px border-r border-b border-[#c4c4c4] shadow-[1px_1px_0_#000] flex items-center justify-center pl-0.5 pt-px text-[#ededed]">Import</div>
      <div class="mt-[7px] h-[25px] w-[144px] ml-px border-r border-b border-[#c4c4c4] shadow-[1px_1px_0_#000] flex items-center justify-center pl-0.5 pt-px">Export</div>
      <div class="mt-[7px] h-[25px] w-[144px] ml-px border-r border-b border-[#c4c4c4] shadow-[1px_1px_0_#000] flex items-center justify-center pl-0.5 pt-px">Remove</div>
      <div class="mt-[6px] h-[26px] w-[145px] border border-t-black border-l-black border-[#c4c4c4] p-[2px] flex text-[#ededed]"><span class="flex-1 border border-dotted border-[#ccc] flex items-center justify-center pl-px">Close</span></div>
    </div>
  </div>
</div>

<!-- Callouts -->
<div class="absolute left-[964px] top-[223px] w-[37px] h-[40px] border-[5px] border-[#fff200] bg-[#323232] flex items-center justify-center shadow-[inset_0_2px_0_#000]"><svg class="size-[15px]"><use href="#gear"/></svg></div>
<div class="absolute left-[996px] top-[627px] w-[159px] h-[39px] border-[5px] border-[#ff0000]"></div>
<svg class="absolute inset-0 w-[1440px] h-[900px]" fill="none" stroke="#2140dc" stroke-width="5"><path d="M1159 199L1408 402M1161 766L1409 433"/><path d="M1406 404.500h25.500v26H1406z"/></svg>

<script>
const ic = n => `<svg class="size-6 shrink-0 mr-[7px]"><use href="#${n}"/></svg>`;
const row = s => s.split(' ').map(n => n === '|' ? sep : ic(n)).join('');
const sep = `<span class="w-px h-7 bg-[#bcbcbc] mr-[5px] shrink-0"></span>`;
const handle = `<span class="w-[3px] h-[26px] border-r border-b border-[#c4c4c4] shrink-0"></span><span class="w-[3px] ml-px h-[26px] border-r border-b border-[#c4c4c4] shrink-0"></span>`;
const edge = `<span class="w-px h-full bg-[#bcbcbc] shrink-0"></span><span class="w-[4px] shrink-0"></span>`;
const arrow = `<span class="ml-auto mr-0.5 w-[15px] h-[17px] bg-[#323232] border-r border-b border-[#c4c4c4] flex items-center justify-center shrink-0"><svg class="w-2 h-1" viewBox="0 0 8 4"><path d="M0 0h8L4 4z"/></svg></span>`;

document.getElementById('tb1').innerHTML =
  `<span class="w-[2px]"></span>${handle}<span class="w-[6px] shrink-0"></span>` +
  row('folder foldersave | connect disconnect clock | undo redo | apply autoc palette') +
  `<span class="-ml-[3px]"></span>${edge}${handle}<span class="w-[5px] shrink-0"></span>` +
  row('first prev play next last loop') +
  `<span class="-ml-[2px]"></span>${edge}${handle}<span class="ml-[1px] w-[36px] text-white">Time:</span>
  <span class="w-[127px] h-[22px] bg-[#1e1e1e] border-t border-l border-[#bcbcbc] shadow-[inset_1px_1px_0_#000] flex items-center pl-[3px] pt-px text-white">0</span>
  <span class="ml-[2px] w-[36px] h-[21px] bg-[#2b2b2b] border-t border-l border-[#bcbcbc] flex items-center pl-[3px] text-[#6f6f6f]">0<span class="ml-auto mr-px flex flex-col gap-0.5"><span class="w-[15px] h-[8px] bg-[#323232] border-r border-b border-[#c4c4c4] flex items-center justify-center"><svg class="w-1 h-0.5" viewBox="0 0 4 2"><path d="M0 2h4L2 0z"/></svg></span><span class="w-[15px] h-[8px] bg-[#323232] border-r border-b border-[#c4c4c4] flex items-center justify-center"><svg class="w-1 h-0.5" viewBox="0 0 4 2"><path d="M0 0h4L2 2z"/></svg></span></span></span>
  <span class="w-[2px]"></span>${edge}${handle}<span class="w-[4px] shrink-0"></span>` + row('camwrench camplus');

const axis = (lab, left, upc, hc, bc) => `<svg class="w-6 h-6 overflow-visible shrink-0 mr-[7px]" viewBox="0 0 24 24">
  <g transform="${left ? '' : 'translate(24 0) scale(-1 1)'}"><path d="M18.500 0l4 5H20v11h-3V5h-2.500z" fill="${upc}"/><path d="M14 17H5v-3l-6 4.500 6 4V20h9z" fill="${hc}"/><path d="M14.500 15h8v8h-8z" fill="${bc}"/></g>
  <text x="${left ? -0.5 : 10.5}" y="11" font-size="10" fill="#7c7c7e">${lab}</text></svg>`;
const G = '#93d687', Y = '#f6b61c', R = '#e0432e';
document.getElementById('tb2').innerHTML =
  `<span class="w-[2px]"></span>${handle}<span class="w-[6px] shrink-0"></span>` +
  row('bar editc chain rescale rescalec rescaleg rescalee') +
  `<span class="-ml-[3px]"></span><span class="w-[168px] h-[21px] shrink-0 bg-[#1e1e1e] border-t border-l border-[#bcbcbc] shadow-[inset_1px_1px_0_#000] flex items-center pl-[9px] pt-px"><svg class="size-[6px] mr-[8px]"><use href="#orange"/></svg>Normals${arrow}</span>
  <span class="w-[81px] h-[21px] ml-[5px] shrink-0 bg-[#1e1e1e] border-t border-l border-[#bcbcbc] shadow-[inset_1px_1px_0_#000] flex items-center pl-[3px] pt-px"><span class="w-[58px] overflow-hidden h-4 leading-4">Magnitud</span>${arrow}</span>
  <span class="w-px"></span>${edge}${handle}
  <span class="w-[149px] h-[21px] ml-0.5 shrink-0 bg-[#1e1e1e] border-t border-l border-[#bcbcbc] shadow-[inset_1px_1px_0_#000] flex items-center pl-[3px] pt-px">Surface${arrow}</span>
  <span class="w-[2px]"></span>${edge}${handle}<span class="w-[4px] shrink-0"></span>` +
  row('reset zoomdata zoombox') +
  axis('+X', 1, G, Y, R) + axis('-X', 0, G, Y, R) + axis('+Y', 0, G, R, Y) + axis('-Y', 1, G, R, Y) + axis('+Z', 1, Y, R, G) + axis('-Z', 0, Y, R, G) +
  `<svg class="w-6 h-6 overflow-visible shrink-0 mr-[7px]" viewBox="0 0 24 24"><path d="M4.500 13A6.500 6.500 0 1 1 14.500 8" fill="none" stroke="#93d687" stroke-width="2"/><path d="M9 6h9l-4 5z" fill="#93d687"/><text x="6" y="24" font-size="8.500" fill="#88888a">+90</text></svg>
  <svg class="w-6 h-6 overflow-visible shrink-0 mr-[7px]" viewBox="0 0 24 24"><path d="M17.500 13A6.500 6.500 0 1 0 7.500 8" fill="none" stroke="#93d687" stroke-width="2"/><path d="M13 6H4l4 5z" fill="#93d687"/><text x="-2" y="24" font-size="8.500" fill="#88888a">-90</text></svg>
  <span class="-ml-[3px]"></span>${edge}${handle}<span class="ml-px w-[30px] h-[29px] border-t border-l border-[#bcbcbc] bg-[#2a2a2a] flex items-center justify-center shrink-0"><svg class="size-6"><use href="#axes"/></svg></span><span class="w-1"></span>` +
  row('ring1 ring2 ring3') +
  `<span class="-ml-[2px]"></span>${edge}${handle}<span class="ml-[7px] w-[82px] text-[11px] tracking-normal">ExportBlender</span><span class="text-[11px] tracking-[-0.2px]">PythonPlot</span>`;

document.getElementById('tb3').innerHTML =
  `<span class="w-[2px]"></span>${handle}<span class="w-[6px] shrink-0"></span>` +
  row('calc contour clip slice thresh extract glyph stream warp group ungroup') +
  `<span class="-ml-[3px]"></span>${edge}${handle}<span class="w-[4px] shrink-0"></span>` +
  row('exsel ptime pline psel hex') +
  `<span class="-ml-[2px]"></span>${edge}${handle}<span class="w-[5px] shrink-0"></span>` + row('ruler');

const vi = s => s.split(' ').map(n => n === '|' ? `<span class="w-px h-[13px] bg-[#bcbcbc] mr-[5px]"></span>` : `<svg class="size-[13px] shrink-0 mr-[6.050px] opacity-85"><use href="#${n}"/></svg>`).join('');
document.getElementById('vtb').innerHTML =
  `<span class="w-1"></span>` + vi('camundo camredo |') + `<span class="text-[10px] w-[19px] text-[#111]">2D</span>` +
  vi('camlink | sadd ssub stog | stri spt fcell fpt pcell ppt blk tri tript qpt qtri trash') +
  `<span class="ml-auto font-bold tracking-[0.13px] text-white underline underline-offset-2 mr-[12px] pt-px">RenderView1</span><span class="flex gap-[3px] mr-px">` +
  ['<path d="M2 3h4v8H2zM8 3h4v8H8z" fill="#dfe6f5" stroke="#000"/>', '<path d="M3 2h8v4H3zM3 8h8v4H3z" fill="#dfe6f5" stroke="#000"/>', '<path d="M2.500 3h9v8h-9z" fill="none" stroke="#000" stroke-width="1.300"/>', '<path d="M5.500 2.500h6v5h-6zM2.500 6.500h6v5h-6z" fill="#323232" stroke="#000"/>', '<path d="M3 3l8 8M11 3l-8 8" stroke="#000" stroke-width="1.300"/>']
    .map(p => `<span class="w-[17px] h-[17px] border-r border-b border-[#c4c4c4] shadow-[1px_1px_0_#000] flex items-center justify-center"><svg class="size-[14px]" viewBox="0 0 14 14">${p}</svg></span>`).join('') + `</span>`;

document.getElementById('props').innerHTML = [['Origin', '-0.5', '-0.5'], ['Point1', '0.5', '-0.5'], ['Point2', '-0.5', '0.5'], ['X Resolution', '1'], ['Y Resolution', '1']]
  .map(([l, ...v]) => `<div class="h-[21px] flex gap-[5px]"><span class="w-[75px] pt-[2px] shrink-0">${l}</span>` +
    v.map(x => `<span class="${v.length > 1 ? 'w-[74px]' : 'w-[200px]'} bg-[#1e1e1e] border-t border-l border-[#bcbcbc] shadow-[inset_1px_1px_0_#000] flex items-center pl-[3px] pt-px tracking-normal text-white">${x}</span>`).join('') + `</div>`).join('');

const presets = [
  ['Cool to Warm', '#3b4cc0,#7b9ff9 20%,#aac7fd 35%,#dddddd 50%,#f7b89c 65%,#e7745b 82%,#b40426'],
  ['Cool to Warm (Extended)', '#0a0060,#234a86 15%,#5aa0bb 33%,#b5e8ee 43%,#f3f3e8 50%,#f4c9a0 57%,#e6855c 68%,#c02828 82%,#6a0f1c 92%,#4a0a38'],
  ['Black-Body Radiation', '#000,#e60000 40%,#e6e600 80%,#fff'],
  ['X Ray', '#fff,#000'],
  ['Inferno (matplotlib)', '#000004,#1b0c41 12%,#4a0c6b 22%,#781c6d 34%,#a52c60 45%,#cf4446 57%,#ed6925 67%,#fb9b06 79%,#f7d13d 90%,#fcffa4'],
  ['Black, Blue and White', '#000,#000080 33%,#0080ff 66%,#fff'],
  ['Blue Orange (divergent)', '#1a0066,#0a18a8 10%,#0a70c0 22%,#10d0e0 36%,#f8fff0 50%,#f4d060 60%,#e07020 76%,#a01008 90%,#300008'],
  ['Viridis (matplotlib)', '#440154,#414487 25%,#2a788e 42%,#22a884 62%,#7ad151 80%,#fde725'],
  ['Gray and Red', '#181818,#888 25%,#fff 50%,#f8b898 64%,#d05848 80%,#67001f'],
  ['Linear Green (Gr4L)', '#0e1c22,#143c34 15%,#1a6a3c 35%,#18a010 53%,#88c838 70%,#e0e088 86%,#fff8d8'],
  ['Cold and Hot', '#00ffff,#0000ff 45%,#000080 50%,#ff0000 55%,#ffff00'],
  ['Blue - Green - Orange', '#d0e8f4,#5898d8 12%,#204878 28%,#0c6c18 40%,#509830 50%,#e0d898 68%,#e09040 80%,#b03818 90%,#680000'],
  ['Rainbow Desaturated', '#4747db,#00005c 14.300%,#00ffff 28.500%,#008000 42.900%,#ffff00 57.100%,#ff6000 71.400%,#6b0000 85.700%,#e04c4c'],
  ['Yellow - Gray - Blue', '#780000,#f07000 12%,#f8c860 20%,#fffce0 32%,#a09880 45%,#504438 56%,#282020 64%,#586890 76%,#98bce0 90%,#d8f0ff'],
  ['Rainbow Uniform', '#1464f8,#2890f0 15%,#08d8a0 28%,#10f020 37%,#f0f008 50%,#f8a820 66%,#f86820 80%,#f83030 87%,#b01080'],
  ['jet', '#000090,#0000ff 12%,#00ffff 37%,#80ff80 50%,#ffff00 62%,#ff0000 87%,#800000'],
  ['Warm to Cool', '#b40426,#e7745b 18%,#f7b89c 35%,#dddddd 50%,#aac7fd 65%,#7b9ff9 80%,#3b4cc0'],
  ['Warm to Cool (Extended)', '#600028,#a01820 12%,#e07850 32%,#f4d0a0 44%,#e8f8f0 50%,#60d8d8 58%,#10a8d0 68%,#0848b0 84%,#180060'],
  ['Grayscale', '#000,#fff'],
  ['Black, Orange and White', '#000,#800000 33%,#ff8000 66%,#fff']
];
document.getElementById('presets').innerHTML = presets.map(([n, g], i) =>
  `<div class="h-[45px] flex items-center border-b border-r border-[#252525] pl-1"><span class="w-[180px] h-5 mr-1.5" style="background:linear-gradient(90deg,${g})"></span><span class="pt-px ${i < 16 ? 'font-bold tracking-[0.13px] text-white underline underline-offset-2' : 'text-[#e9e9e9]'}">${n}</span></div>`).join('');
</script>
</body>
</html>
